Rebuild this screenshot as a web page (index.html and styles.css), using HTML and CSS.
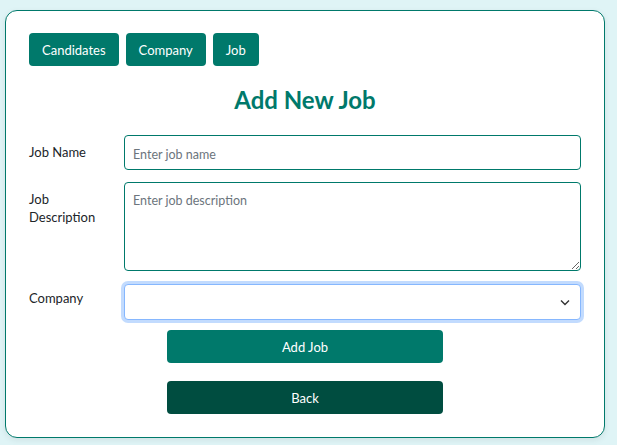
FILE: index.html
```html
<!DOCTYPE html>
<html lang="en">
<head>
<meta charset="utf-8">
<title>Add New Job</title>
<link rel="stylesheet" href="styles.css">
</head>
<body>
<div class="card">
  <nav class="nav">
    <button class="nav-btn">Candidates</button>
    <button class="nav-btn">Company</button>
    <button class="nav-btn">Job</button>
  </nav>
  <h2 class="title">Add New Job</h2>
  <form class="form">
    <label class="label">Job Name</label>
    <input class="field" type="text" placeholder="Enter job name">
    <label class="label">Job Description</label>
    <textarea class="field area" placeholder="Enter job description"></textarea>
    <label class="label label-company">Company</label>
    <div class="select-wrap">
      <div class="field select">
        <svg class="chev" width="10" height="7" viewBox="0 0 10 7"><path d="M1 1.5 L5 5.5 L9 1.5" fill="none" stroke="#333" stroke-width="1.4"/></svg>
      </div>
    </div>
  </form>
  <div class="actions">
    <button class="btn btn-add">Add Job</button>
    <button class="btn btn-back">Back</button>
  </div>
</div>
</body>
</html>
```

FILE: styles.css
```css
html, body { margin: 0; padding: 0; }
body {
  background: #dff4f6;
  font-family: "Segoe UI", "Lato", "Noto Sans", sans-serif;
  font-size: 13px;
  color: #212529;
  padding: 10px 12px 7px 5px;
  height: 445px;
  box-sizing: border-box;
}
.card {
  background: #fff;
  border: 1px solid #00796b;
  border-radius: 12px;
  box-sizing: border-box;
  width: 600px;
  height: 428px;
  padding: 22px 23px 23px 23px;
  box-shadow: 0 2px 6px rgba(0,0,0,0.08);
}
.nav { display: flex; gap: 7px; }
.nav-btn {
  background: #00796b;
  color: #fff;
  border: 0;
  border-radius: 4px;
  height: 33px;
  padding: 0 13px;
  font: inherit;
}
.title {
  text-align: center;
  color: #00796b;
  font-size: 24px;
  font-weight: 700;
  margin: 19px 0 20px;
  line-height: 30px;
}
.form {
  display: grid;
  grid-template-columns: 85px 1fr;
  column-gap: 10px;
  row-gap: 12px;
}
.label { padding-top: 8px; line-height: 18px; }
.label-company { padding-top: 6px; }
.field {
  border: 1px solid #00796b;
  border-radius: 4px;
  height: 35px;
  box-sizing: border-box;
  padding: 9px 8px 5px;
  font: inherit;
  font-size: 12.5px;
  color: #212529;
  background: #fff;
  width: 100%;
  margin: 0;
}
.field::placeholder { color: #6c757d; }
.area { height: 89px; resize: vertical; display: block; padding-top: 10px; }
.select-wrap { padding-top: 1px; }
.select {
  height: 36px;
  border-color: #86b7fe;
  box-shadow: 0 0 0 3px rgba(13,110,253,0.25);
  display: flex;
  align-items: center;
  justify-content: flex-end;
  padding: 0 10px 0 0;
}
.actions {
  display: flex;
  flex-direction: column;
  align-items: center;
  margin-top: 10px;
  gap: 18px;
}
.btn {
  width: 276px;
  height: 33px;
  border: 0;
  border-radius: 4px;
  color: #fff;
  font: inherit;
}
.btn-add { background: #00796b; }
.btn-back { background: #004d40; }
```
